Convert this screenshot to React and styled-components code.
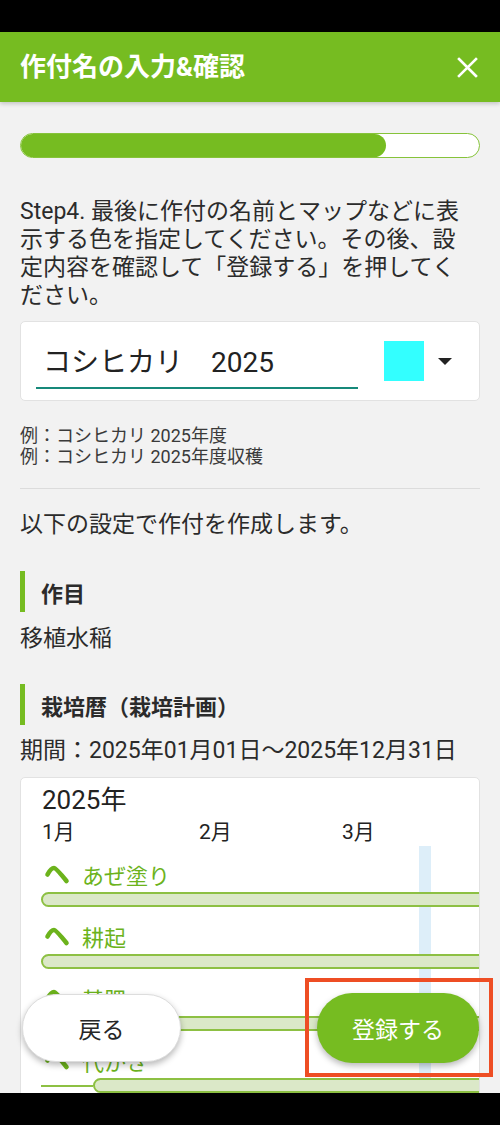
import styled, { createGlobalStyle } from 'styled-components';

const GREEN = '#76bc21';

const GlobalStyle = createGlobalStyle`
  html, body {
    margin: 0;
    padding: 0;
    background: #000;
  }
  body {
    font-family: "Roboto", "Noto Sans CJK JP", sans-serif;
    color: #262626;
  }
  * {
    box-sizing: border-box;
  }
`;

const Screen = styled.div`
  width: 500px;
  height: 1125px;
  display: flex;
  flex-direction: column;
  background: #f2f2f2;
  position: relative;
  overflow: hidden;
`;

const SystemBar = styled.div`
  height: 32px;
  flex-shrink: 0;
  background: #000;
`;

const Header = styled.header`
  height: 70px;
  flex-shrink: 0;
  display: flex;
  align-items: center;
  justify-content: space-between;
  padding: 0 20px;
  background: ${GREEN};
  box-shadow: 0 2px 4px rgba(0, 0, 0, 0.18);
  position: relative;
  z-index: 2;
`;

const Title = styled.h1`
  margin: 0;
  font-size: 26px;
  font-weight: 700;
  color: #fff;
  line-height: 1;
`;

const CloseButton = styled.button`
  width: 24px;
  height: 24px;
  padding: 0;
  border: none;
  background: none;
  display: flex;
  align-items: center;
  justify-content: center;
  margin-right: 1px;
`;

const Body = styled.main`
  flex: 1;
  min-height: 0;
  position: relative;
  overflow: hidden;
`;

const Content = styled.div`
  padding: 31px 20px 0;
  display: flex;
  flex-direction: column;
`;

const Progress = styled.div`
  height: 25px;
  border: 1px solid #86c33a;
  border-radius: 13px;
  background: #fff;
  overflow: hidden;
`;

const ProgressFill = styled.div`
  height: 100%;
  background: ${GREEN};
  border-radius: 13px;
`;

const Lead = styled.p`
  margin: 40px 0 0;
  width: 455px;
  font-size: 23px;
  line-height: 28px;
  color: #2b2b2b;
`;

const NameCard = styled.div`
  margin-top: 11px;
  height: 80px;
  background: #fff;
  border: 1px solid #e2e2e2;
  border-radius: 5px;
  display: flex;
  align-items: center;
  padding: 0 0 0 15px;
`;

const NameField = styled.div`
  width: 322px;
  height: 52px;
  padding: 6px 0 0 7px;
  border-bottom: 2px solid #16897a;
  font-size: 28px;
  line-height: 40px;
  color: #222;
  margin-top: 4px;
`;

const Swatch = styled.div`
  width: 40px;
  height: 40px;
  margin-left: 26px;
  background: ${(p) => p.$color};
`;

const Caret = styled.div`
  margin-left: 14px;
  width: 0;
  height: 0;
  border-left: 7px solid transparent;
  border-right: 7px solid transparent;
  border-top: 7px solid #222;
`;

const Examples = styled.div`
  margin-top: 24px;
  font-size: 18px;
  line-height: 21px;
  color: #3a3a3a;
`;

const Divider = styled.hr`
  margin: 21px 0 0;
  border: none;
  border-top: 1px solid #dcdcdc;
`;

const Text = styled.p`
  margin: ${(p) => p.$top || 0}px 0 0;
  font-size: 23px;
  line-height: 28px;
  color: #2b2b2b;
  white-space: nowrap;
`;

const SectionTitle = styled.h2`
  margin: ${(p) => p.$top}px 0 0;
  height: 41px;
  display: flex;
  align-items: center;
  padding-left: 16px;
  border-left: 5px solid ${GREEN};
  font-size: 22px;
  font-weight: 700;
  color: #2b2b2b;
`;

const ChartCard = styled.div`
  margin-top: 12px;
  height: 400px;
  background: #fff;
  border: 1px solid #e2e2e2;
  border-radius: 5px;
  padding: 6px 0 0 20px;
  position: relative;
  overflow: hidden;
`;

const Year = styled.div`
  padding-left: 1px;
  font-size: 26px;
  line-height: 32px;
  color: #222;
`;

const MonthRow = styled.div`
  display: flex;
  padding-left: 1px;
  margin: 3px 0 14px;
`;

const Month = styled.div`
  width: ${(p) => p.$w}px;
  flex-shrink: 0;
  font-size: 21px;
  line-height: 26px;
  color: #222;
`;

const TodayBand = styled.div`
  position: absolute;
  left: 398px;
  top: 68px;
  bottom: 0;
  width: 12px;
  background: #ddeef9;
`;

const Task = styled.div`
  position: relative;
  z-index: 1;
`;

const TaskLabel = styled.div`
  height: 30px;
  display: flex;
  align-items: center;
  gap: 12px;
  padding-left: 3px;
  font-size: 22px;
  color: #6cb31c;
`;

const BarRow = styled.div`
  width: 620px;
  height: 15px;
  margin: 3px 0 14px;
  display: flex;
  align-items: center;
`;

const LeadLine = styled.div`
  width: ${(p) => p.$w}px;
  height: 2px;
  background: #8dc043;
  flex-shrink: 0;
`;

const Bar = styled.div`
  flex: 1;
  height: 15px;
  background: #dbe8c8;
  border: 2px solid #8dc043;
  border-radius: 8px 0 0 8px;
`;

const ButtonBar = styled.div`
  position: absolute;
  left: 22px;
  right: 21px;
  bottom: 30px;
  display: flex;
  justify-content: space-between;
  align-items: center;
  z-index: 3;
`;

const PillButton = styled.button`
  height: ${(p) => (p.$primary ? 70 : 68)}px;
  width: ${(p) => (p.$primary ? 162 : 159)}px;
  border-radius: 35px;
  border: ${(p) => (p.$primary ? 'none' : '1px solid #dddddd')};
  background: ${(p) => (p.$primary ? GREEN : '#fff')};
  color: ${(p) => (p.$primary ? '#fff' : '#262626')};
  font-family: "Roboto", "Noto Sans CJK JP", sans-serif;
  font-size: 23px;
  box-shadow: 0 3px 6px rgba(0, 0, 0, 0.28);
  padding: 0;
`;

const Annotation = styled.div`
  position: absolute;
  left: 305px;
  top: 978px;
  width: 188px;
  height: 99px;
  border: 4px solid #ee4e24;
  z-index: 5;
  pointer-events: none;
`;

const Chevron = () => (
  <svg width="26" height="22" viewBox="0 0 26 22">
    <path
      d="M3.5 11.5 Q7 5 10 5 Q12 5 22.5 18"
      fill="none"
      stroke="#6cb31c"
      strokeWidth="4.6"
      strokeLinecap="round"
      strokeLinejoin="round"
    />
  </svg>
);

const tasks = [
  { name: 'あぜ塗り', offset: 0 },
  { name: '耕起', offset: 0 },
  { name: '基肥', offset: 0 },
  { name: '代かき', offset: 52 },
];

export default function App() {
  return (
    <Screen>
      <GlobalStyle />
      <SystemBar />
      <Header>
        <Title>作付名の入力&amp;確認</Title>
        <CloseButton aria-label="close">
          <svg width="21" height="21" viewBox="0 0 21 21">
            <path d="M2 2 L19 19 M19 2 L2 19" stroke="#fff" strokeWidth="2.6" strokeLinecap="square" />
          </svg>
        </CloseButton>
      </Header>
      <Body>
        <Content>
          <Progress>
            <ProgressFill style={{ width: '79.6%' }} />
          </Progress>
          <Lead>
            Step4. 最後に作付の名前とマップなどに表示する色を指定してください。その後、設定内容を確認して「登録する」を押してください。
          </Lead>
          <NameCard>
            <NameField>コシヒカリ　2025</NameField>
            <Swatch $color="#33ffff" />
            <Caret />
          </NameCard>
          <Examples>
            例：コシヒカリ 2025年度
            <br />
            例：コシヒカリ 2025年度収穫
          </Examples>
          <Divider />
          <Text $top={22}>以下の設定で作付を作成します。</Text>
          <SectionTitle $top={32}>作目</SectionTitle>
          <Text $top={13}>移植水稲</Text>
          <SectionTitle $top={31}>栽培暦（栽培計画）</SectionTitle>
          <Text $top={12}>期間：2025年01月01日〜2025年12月31日</Text>
          <ChartCard>
            <TodayBand />
            <Year>2025年</Year>
            <MonthRow>
              <Month $w={157}>1月</Month>
              <Month $w={143}>2月</Month>
              <Month $w={143}>3月</Month>
            </MonthRow>
            {tasks.map((t) => (
              <Task key={t.name}>
                <TaskLabel>
                  <Chevron />
                  {t.name}
                </TaskLabel>
                <BarRow>
                  {t.offset > 0 && <LeadLine $w={t.offset} />}
                  <Bar />
                </BarRow>
              </Task>
            ))}
          </ChartCard>
        </Content>
        <ButtonBar>
          <PillButton>戻る</PillButton>
          <PillButton $primary>登録する</PillButton>
        </ButtonBar>
      </Body>
      <SystemBar />
      <Annotation />
    </Screen>
  );
}
